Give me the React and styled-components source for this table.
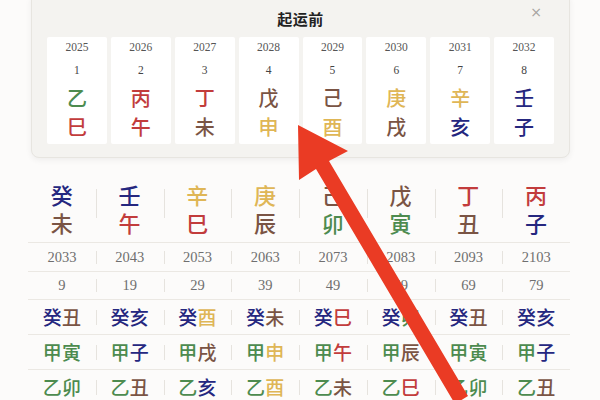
import React from "react";
import styled, { createGlobalStyle } from "styled-components";

const GlobalStyle = createGlobalStyle`
  html, body { margin: 0; padding: 0; background: #fbfaf8; }
  body { font-family: "Liberation Serif", "Noto Sans CJK SC", serif; overflow: hidden; }
`;

const COLORS = {
  wood: "#4d8b4f",
  fire: "#c23c3c",
  earth: "#7a5444",
  metal: "#dfb656",
  water: "#25277f",
};

const ELEMENT = {
  甲: "wood", 乙: "wood", 寅: "wood", 卯: "wood",
  丙: "fire", 丁: "fire", 巳: "fire", 午: "fire",
  戊: "earth", 己: "earth", 辰: "earth", 戌: "earth", 丑: "earth", 未: "earth",
  庚: "metal", 辛: "metal", 申: "metal", 酉: "metal",
  壬: "water", 癸: "water", 子: "water", 亥: "water",
};

const colorOf = (c) => COLORS[ELEMENT[c]] || "#333";

const Page = styled.div`
  position: relative;
  width: 600px;
  height: 400px;
  overflow: hidden;
  background: #fcfbfa;
`;

const Popup = styled.section`
  position: relative;
  box-sizing: border-box;
  width: 539px;
  margin: -8px 0 0 31px;
  padding: 8px 15px 13px;
  background: #f4f3f0;
  border: 1px solid #e7e5e0;
  border-radius: 8px;
  box-shadow: 0 2px 6px rgba(0, 0, 0, 0.06);
`;

const PopupHeader = styled.header`
  position: relative;
  height: 37px;
  display: flex;
  align-items: center;
  justify-content: center;
  margin-top: -1px;
`;

const Title = styled.h2`
  margin: 0;
  font-family: "Noto Sans CJK SC", sans-serif;
  font-size: 15px;
  font-weight: 700;
  color: #222;
  letter-spacing: 0.5px;
`;

const Close = styled.span`
  position: absolute;
  right: 12px;
  top: 4px;
  font-family: "DejaVu Sans", sans-serif;
  font-size: 14px;
  color: #a5a3a0;
`;

const CardGrid = styled.div`
  display: grid;
  grid-template-columns: repeat(8, 1fr);
  gap: 4px;
`;

const Card = styled.div`
  height: 107px;
  background: #fff;
  border-radius: 2px;
  display: flex;
  flex-direction: column;
  align-items: center;
  padding-top: 3px;
  box-sizing: border-box;
`;

const CardYear = styled.div`
  font-size: 11.5px;
  line-height: 14px;
  color: #555;
`;

const CardNum = styled.div`
  margin-top: 9px;
  font-size: 11.5px;
  line-height: 14px;
  color: #444;
`;

const BigChar = styled.div`
  font-family: "Noto Sans CJK SC", sans-serif;
  font-size: ${(p) => p.$size}px;
  line-height: ${(p) => p.$lh}px;
  font-weight: 500;
  color: ${(p) => p.$color};
`;

const CardChars = styled.div`
  margin-top: 6px;
  display: flex;
  flex-direction: column;
  align-items: center;
`;

const Table = styled.div`
  width: 542px;
  margin-left: 28px;
`;

const Row = styled.div`
  display: grid;
  grid-template-columns: repeat(8, 1fr);
  height: ${(p) => p.$h}px;
  border-bottom: ${(p) => (p.$last ? "none" : "1px solid #ebe8e3")};
  align-items: ${(p) => p.$align || "center"};
`;

const Cell = styled.div`
  position: relative;
  display: flex;
  flex-direction: ${(p) => (p.$column ? "column" : "row")};
  align-items: center;
  justify-content: center;
  padding-top: ${(p) => p.$pt || 0}px;
  height: 100%;
  box-sizing: border-box;
  &:not(:first-child)::before {
    content: "";
    position: absolute;
    left: 0;
    top: ${(p) => p.$dTop}px;
    height: ${(p) => p.$dH}px;
    border-left: 1px solid #e6e3de;
  }
`;

const NumText = styled.span`
  font-size: 14.5px;
  color: #6f6f6f;
`;

const PairText = styled.span`
  font-family: "Noto Sans CJK SC", sans-serif;
  font-size: 19px;
  line-height: 22px;
  font-weight: 500;
  color: ${(p) => p.$color};
`;

const ArrowLayer = styled.svg`
  position: absolute;
  left: 0;
  top: 0;
  pointer-events: none;
`;

const popupCards = [
  ["2025", "1", "乙", "巳"],
  ["2026", "2", "丙", "午"],
  ["2027", "3", "丁", "未"],
  ["2028", "4", "戊", "申"],
  ["2029", "5", "己", "酉"],
  ["2030", "6", "庚", "戌"],
  ["2031", "7", "辛", "亥"],
  ["2032", "8", "壬", "子"],
];

const pillars = ["癸未", "壬午", "辛巳", "庚辰", "己卯", "戊寅", "丁丑", "丙子"];
const years = ["2033", "2043", "2053", "2063", "2073", "2083", "2093", "2103"];
const ages = ["9", "19", "29", "39", "49", "59", "69", "79"];
const pairRows = [
  ["癸丑", "癸亥", "癸酉", "癸未", "癸巳", "癸卯", "癸丑", "癸亥"],
  ["甲寅", "甲子", "甲戌", "甲申", "甲午", "甲辰", "甲寅", "甲子"],
  ["乙卯", "乙丑", "乙亥", "乙酉", "乙未", "乙巳", "乙卯", "乙丑"],
];

export default function App() {
  return (
    <>
      <GlobalStyle />
      <Page>
        <Popup>
          <PopupHeader>
            <Title>起运前</Title>
            <Close>×</Close>
          </PopupHeader>
          <CardGrid>
            {popupCards.map(([y, n, s, b]) => (
              <Card key={y}>
                <CardYear>{y}</CardYear>
                <CardNum>{n}</CardNum>
                <CardChars>
                  <BigChar $size={20} $lh={29} $color={colorOf(s)}>{s}</BigChar>
                  <BigChar $size={20} $lh={29} $color={colorOf(b)}>{b}</BigChar>
                </CardChars>
              </Card>
            ))}
          </CardGrid>
        </Popup>
        <Table>
          <Row $h={84} $align="start">
            {pillars.map((p, i) => (
              <Cell key={i} $column $pt={15} $dTop={31} $dH={29}>
                <BigChar $size={22} $lh={28} $color={colorOf(p[0])}>{p[0]}</BigChar>
                <BigChar $size={22} $lh={28} $color={colorOf(p[1])}>{p[1]}</BigChar>
              </Cell>
            ))}
          </Row>
          <Row $h={28}>
            {years.map((y) => (
              <Cell key={y} $dTop={8} $dH={13}>
                <NumText>{y}</NumText>
              </Cell>
            ))}
          </Row>
          <Row $h={27}>
            {ages.map((a) => (
              <Cell key={a} $dTop={7} $dH={13}>
                <NumText>{a}</NumText>
              </Cell>
            ))}
          </Row>
          {pairRows.map((r, ri) => (
            <Row key={ri} $h={34} $last={ri === pairRows.length - 1}>
              {r.map((p, i) => (
                <Cell key={i} $dTop={10} $dH={15}>
                  <PairText $color={colorOf(p[0])}>{p[0]}</PairText>
                  <PairText $color={colorOf(p[1])}>{p[1]}</PairText>
                </Cell>
              ))}
            </Row>
          ))}
        </Table>
        <ArrowLayer width="600" height="400" viewBox="0 0 600 400">
          <polygon
            fill="#ea3b24"
            points="298,125 348,151 329,161 468,396 455,404 316,169 299,180"
          />
        </ArrowLayer>
      </Page>
    </>
  );
}
